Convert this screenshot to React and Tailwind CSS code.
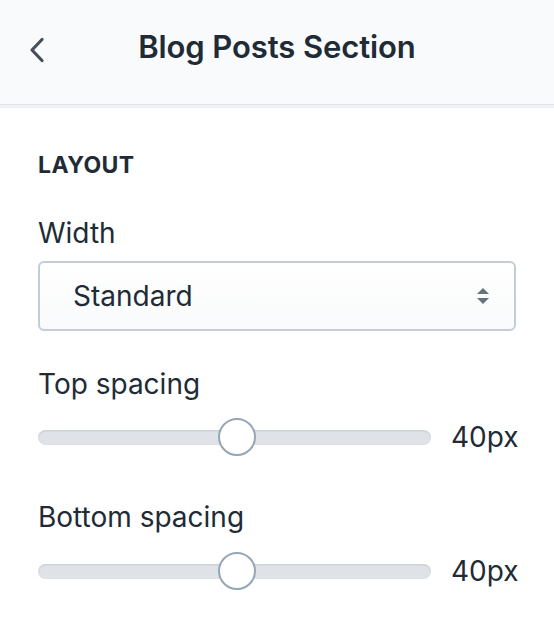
import React from "react";

function Slider({ value }) {
  return (
    <div className="flex items-center h-[44px]">
      <div className="relative shrink-0 w-[393px] h-[44px] flex items-center">
        <div className="w-full h-[15px] rounded-full bg-[#dfe3e8] shadow-[inset_0_1px_2px_rgba(145,158,171,0.35)]" />
        <div className="absolute left-[180px] top-[3px] w-[38px] h-[38px] rounded-full bg-white border-2 border-[#95a6b6]" />
      </div>
      <span className="ml-[20px] whitespace-nowrap text-[28px] leading-[32px] text-[#212b36]">{value}</span>
    </div>
  );
}

export default function App() {
  return (
    <div className="w-[554px] h-[630px] bg-white overflow-hidden" style={{ fontFamily: "Inter, 'Liberation Sans', sans-serif" }}>
      <div className="relative h-[105px] bg-[#f9fafb] border-b border-[#dfe3e8] shadow-[0_3px_0_0_#eef1f4] flex items-center justify-center">
        <svg className="absolute left-[27px] top-[37px]" width="20" height="26" viewBox="0 0 20 26" fill="none">
          <path d="M15 2.5 L5 13 L15 23.5" stroke="#454f5b" strokeWidth="3.2" strokeLinecap="round" strokeLinejoin="round" />
        </svg>
        <h1 className="text-[31px] leading-[38px] font-semibold text-[#212b36] tracking-[-0.1px] -mt-[10px]">Blog Posts Section</h1>
      </div>
      <div className="px-[38px] pt-[46px]">
        <div className="text-[23px] font-bold text-[#212b36] tracking-[0.4px] leading-[28px]">LAYOUT</div>
        <div className="mt-[38px] text-[28px] text-[#212b36] leading-[32px]">Width</div>
        <div className="mt-[12px] h-[70px] rounded-[6px] border-2 border-[#c4cdd5] bg-gradient-to-b from-white to-[#f9fafb] flex items-center justify-between pl-[33px] pr-[24px]">
          <span className="text-[28px] leading-[32px] text-[#212b36]">Standard</span>
          <svg width="14" height="20" viewBox="0 0 14 20">
            <path d="M7 2 L13 8 L1 8 Z" fill="#637381" />
            <path d="M1 12 L13 12 L7 18 Z" fill="#637381" />
          </svg>
        </div>
        <div className="mt-[37px] text-[28px] text-[#212b36] leading-[32px]">Top spacing</div>
        <div className="mt-[15px]"><Slider value="40px" /></div>
        <div className="mt-[42px] text-[28px] text-[#212b36] leading-[32px]">Bottom spacing</div>
        <div className="mt-[16px]"><Slider value="40px" /></div>
      </div>
    </div>
  );
}
